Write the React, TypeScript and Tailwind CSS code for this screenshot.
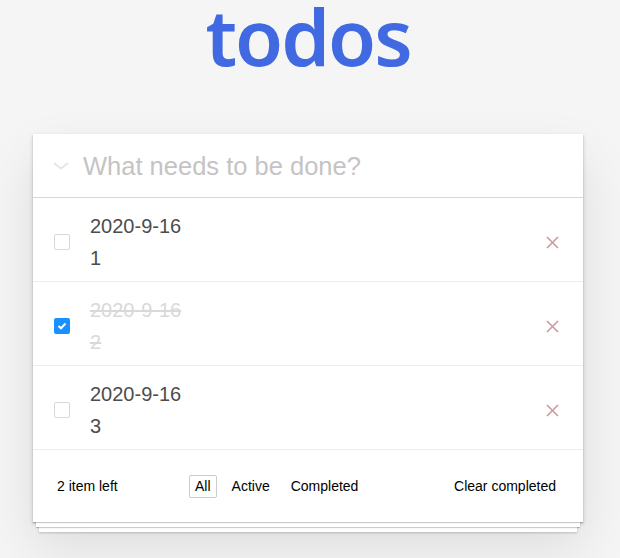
import React from "react";

type Todo = { id: number; date: string; text: string; done: boolean };

const todos: Todo[] = [
  { id: 1, date: "2020-9-16", text: "1", done: false },
  { id: 2, date: "2020-9-16", text: "2", done: true },
  { id: 3, date: "2020-9-16", text: "3", done: false },
];

const Checkbox: React.FC<{ checked: boolean }> = ({ checked }) =>
  checked ? (
    <span className="flex h-[16px] w-[16px] items-center justify-center rounded-[2px] bg-[#1890ff]">
      <svg width="10" height="8" viewBox="0 0 10 8">
        <polyline points="1.5,4 4,6.3 8.5,1.5" fill="none" stroke="#fff" strokeWidth="2" />
      </svg>
    </span>
  ) : (
    <span className="block h-[16px] w-[16px] rounded-[2px] border border-[#d9d9d9] bg-white" />
  );

const App: React.FC = () => {
  return (
    <div className="min-h-[558px] bg-[#f5f5f5] pr-[4px] font-['Liberation_Sans',Arial,sans-serif] flex flex-col items-center">
      {/* título */}
      <h1 className="text-[78px] leading-[72px] font-semibold tracking-[-2px] text-[#4169e1] font-['Noto_Sans',sans-serif]">
        todos
      </h1>

      {/* tarjeta principal */}
      <div className="mt-[62px] w-[550px] bg-white shadow-[0_1px_1px_rgba(0,0,0,0.2),0_8px_0_-3px_#fff,0_9px_1px_-3px_rgba(0,0,0,0.2),0_16px_0_-6px_#fff,0_17px_2px_-6px_rgba(0,0,0,0.2),0_2px_4px_rgba(0,0,0,0.2),0_25px_50px_rgba(0,0,0,0.1)]">
        {/* entrada */}
        <div className="flex h-[64px] items-center border-b border-[#d6d6d6]">
          <svg className="ml-[20px]" width="16" height="8" viewBox="0 0 16 8">
            <polyline points="1,1 8,6.5 15,1" fill="none" stroke="#e6e6e6" strokeWidth="2" />
          </svg>
          <span className="ml-[14px] pt-[2px] text-[25.5px] text-[#c4c4c4]">What needs to be done?</span>
        </div>

        {/* lista */}
        {todos.map((t) => (
          <div key={t.id} className="flex items-center border-b border-[#ededed] pt-[12px] pb-[7px]">
            <div className="ml-[21px]">
              <Checkbox checked={t.done} />
            </div>
            <div
              className={`ml-[20px] flex-1 text-[20px] leading-[32px] ${
                t.done ? "text-[#d9d9d9] line-through" : "text-[#4d4d4d]"
              }`}
            >
              <div>{t.date}</div>
              <div>{t.text}</div>
            </div>
            <svg className="mr-[24px]" width="13" height="13" viewBox="0 0 13 13">
              <path d="M1 1L12 12M12 1L1 12" stroke="#cc9a9a" strokeWidth="1.6" />
            </svg>
          </div>
        ))}

        {/* pie */}
        <div className="flex h-[72px] items-center text-[14px] text-black">
          <span className="ml-[24px] w-[132px]">2 item left</span>
          <div className="flex gap-[9px]">
            <span className="rounded-[2px] border border-[#cccccc] px-[5px] py-[2px] leading-[17px]">All</span>
            <span className="rounded-[2px] border border-transparent px-[5px] py-[2px] leading-[17px]">Active</span>
            <span className="rounded-[2px] border border-transparent px-[5px] py-[2px] leading-[17px]">Completed</span>
          </div>
          <span className="ml-auto mr-[27px]">Clear completed</span>
        </div>
      </div>
    </div>
  );
};

export default App;
